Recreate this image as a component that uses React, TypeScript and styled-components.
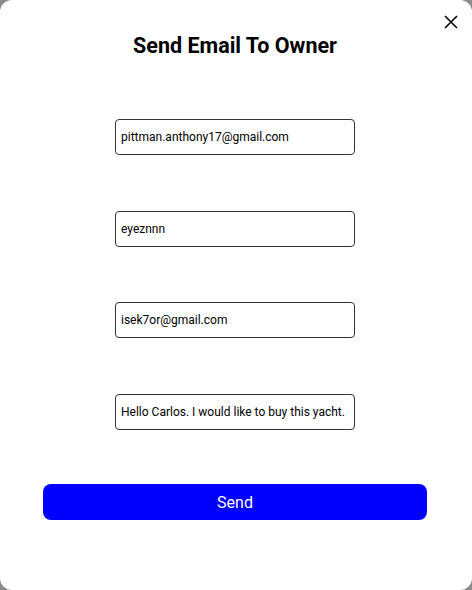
import styled, { createGlobalStyle } from 'styled-components';

const GlobalStyle = createGlobalStyle`
  html, body {
    margin: 0;
    padding: 0;
    background: #8a8a8a;
  }
  * {
    box-sizing: border-box;
  }
`;

const Modal = styled.div`
  position: relative;
  width: 472px;
  height: 590px;
  background: #ffffff;
  border-radius: 12px;
  font-family: Roboto, "Liberation Sans", sans-serif;
  display: flex;
  flex-direction: column;
  align-items: center;
  padding-top: 33px;
  padding-right: 2px;
`;

const CloseButton = styled.button`
  position: absolute;
  top: 13px;
  right: 12px;
  width: 18px;
  height: 18px;
  padding: 0;
  border: none;
  background: transparent;
  cursor: pointer;
  display: flex;
  align-items: center;
  justify-content: center;
`;

const Title = styled.h2`
  margin: 0;
  font-size: 21.5px;
  line-height: 26px;
  font-weight: 700;
  color: #000;
`;

const Form = styled.form`
  display: flex;
  flex-direction: column;
  align-items: center;
  width: 100%;
  margin-top: 60px;
  gap: 56px;
`;

const Field = styled.input<{ $pull?: number }>`
  width: 240px;
  height: 36px;
  margin-top: ${(p) => -(p.$pull ?? 0)}px;
  border: 1px solid #333;
  border-radius: 4px;
  padding: 0 5px;
  font-family: Roboto, "Liberation Sans", sans-serif;
  font-size: 12px;
  color: #000;
  background: #fff;
  outline: none;
`;

const SendButton = styled.button`
  width: 384px;
  height: 36px;
  margin-top: -2px;
  border: none;
  border-radius: 8px;
  background: #0000ff;
  color: #fff;
  font-family: Roboto, "Liberation Sans", sans-serif;
  font-size: 16px;
  cursor: pointer;
`;

export default function App() {
  return (
    <>
      <GlobalStyle />
      <Modal>
        <CloseButton aria-label="Close">
          <svg width="14" height="14" viewBox="0 0 14 14">
            <path d="M1 1L13 13M13 1L1 13" stroke="#000" strokeWidth="1.6" />
          </svg>
        </CloseButton>
        <Title>Send Email To Owner</Title>
        <Form onSubmit={(e) => e.preventDefault()}>
          <Field defaultValue="pittman.anthony17@gmail.com" />
          <Field defaultValue="eyeznnn" />
          <Field $pull={1} defaultValue="isek7or@gmail.com" />
          <Field defaultValue="Hello Carlos. I would like to buy this yacht." />
          <SendButton type="submit">Send</SendButton>
        </Form>
      </Modal>
    </>
  );
}
